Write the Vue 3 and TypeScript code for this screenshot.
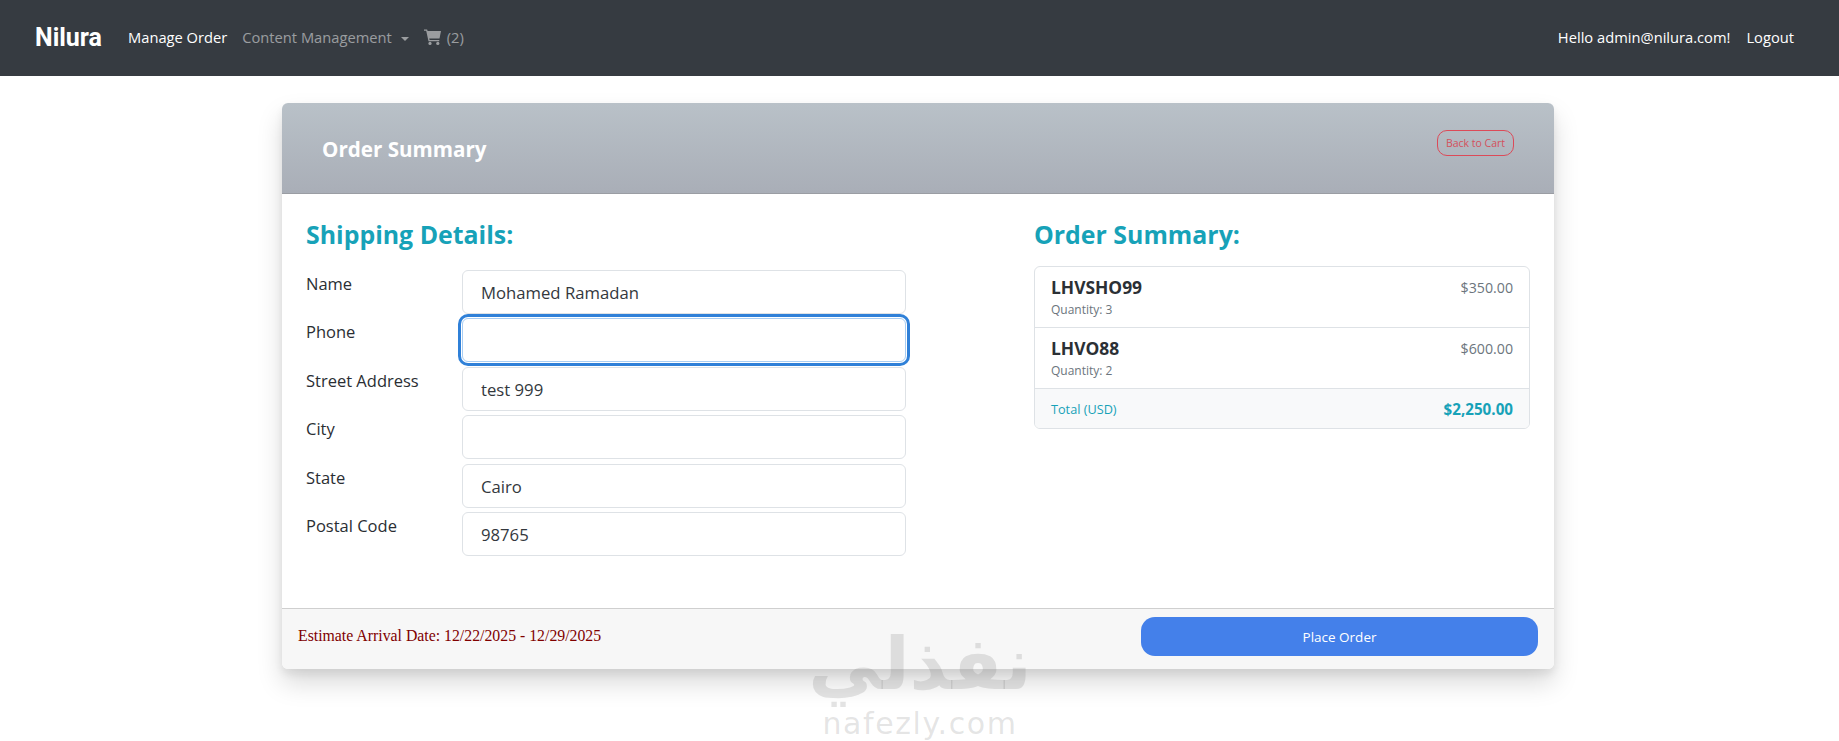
<script setup lang="ts">
interface Field { label: string; value: string; focused?: boolean }
interface Item { code: string; qty: number; price: string }

const fields: Field[] = [
  { label: 'Name', value: 'Mohamed Ramadan' },
  { label: 'Phone', value: '', focused: true },
  { label: 'Street Address', value: 'test 999' },
  { label: 'City', value: '' },
  { label: 'State', value: 'Cairo' },
  { label: 'Postal Code', value: '98765' },
]
const items: Item[] = [
  { code: 'LHVSHO99', qty: 3, price: '$350.00' },
  { code: 'LHVO88', qty: 2, price: '$600.00' },
]
</script>

<template>
  <div class="page">
    <nav class="navbar">
      <div class="nav-left">
        <a class="brand">Nilura</a>
        <a class="link active">Manage Order</a>
        <a class="link muted">Content Management<span class="caret"></span></a>
        <a class="link muted cart">
          <svg class="cart-icon" viewBox="0 0 17 16" aria-hidden="true">
            <path fill="currentColor" d="M0 .5h3.100l.5 1.500H17l-1.500 7.600H5.200l.4 1.500h9.700v1.200H4.500L2.200 1.700H0z" />
            <circle fill="currentColor" cx="6" cy="14.400" r="1.600" />
            <circle fill="currentColor" cx="13.800" cy="14.400" r="1.600" />
          </svg>
          <span>(2)</span>
        </a>
      </div>
      <div class="nav-right">
        <span class="link active">Hello admin@nilura.com!</span>
        <a class="link active">Logout</a>
      </div>
    </nav>

    <main class="card">
      <header class="card-header">
        <h1 class="card-title">Order Summary</h1>
        <button class="back-btn" type="button">Back to Cart</button>
      </header>

      <section class="card-body">
        <div class="col-shipping">
          <h2 class="section-title">Shipping Details:</h2>
          <form class="form">
            <template v-for="f in fields" :key="f.label">
              <label class="form-label">{{ f.label }}</label>
              <input class="form-input" :class="{ focused: f.focused }" type="text" :value="f.value" />
            </template>
          </form>
        </div>

        <div class="col-summary">
          <h2 class="section-title">Order Summary:</h2>
          <ul class="list">
            <li v-for="it in items" :key="it.code" class="list-item">
              <div>
                <div class="item-code">{{ it.code }}</div>
                <div class="item-qty">Quantity: {{ it.qty }}</div>
              </div>
              <span class="item-price">{{ it.price }}</span>
            </li>
            <li class="list-total">
              <span class="total-label">Total (USD)</span>
              <strong class="total-value">$2,250.00</strong>
            </li>
          </ul>
        </div>
      </section>

      <footer class="card-footer">
        <span class="arrival">Estimate Arrival Date: 12/22/2025 - 12/29/2025</span>
        <button class="place-btn" type="button">Place Order</button>
      </footer>
    </main>

    <div class="watermark">
      <div class="wm-ar" dir="rtl" lang="ar">نفذلي</div>
      <div class="wm-en">nafezly.com</div>
    </div>
  </div>
</template>

<style>
html, body { margin: 0; background: #fff; }
</style>

<style scoped>
* { box-sizing: border-box; }
.page {
  position: relative;
  height: 741px;
  overflow: hidden;
  font-family: "Open Sans", "Noto Sans", "Liberation Sans", sans-serif;
  color: #212529;
}
.navbar {
  height: 76px;
  background: #363b41;
  display: flex;
  align-items: center;
  justify-content: space-between;
  padding: 0 45px 2px 35px;
}
.nav-left, .nav-right { display: flex; align-items: center; }
.brand {
  font-family: Roboto, "Liberation Sans", sans-serif;
  font-weight: 700;
  font-size: 25px;
  color: #fff;
  margin-right: 26px;
}
.link { font-size: 14.7px; white-space: nowrap; }
.active { color: #fff; }
.muted { color: rgba(255, 255, 255, 0.5); }
.nav-left .link { margin-right: 15px; }
.nav-right .link { margin-left: 16px; }
.caret {
  display: inline-block;
  margin-left: 9px;
  vertical-align: 2px;
  border-top: 4px solid currentColor;
  border-left: 4px solid transparent;
  border-right: 4px solid transparent;
}
.cart { display: flex; align-items: center; gap: 6px; }
.cart-icon { width: 17px; height: 16px; }

.card {
  margin: 27px 0 0 282px;
  width: 1272px;
  height: 566px;
  display: flex;
  flex-direction: column;
  border-radius: 6px;
  background: #fff;
  box-shadow: 0 14px 26px rgba(0, 0, 0, 0.15), 0 5px 9px rgba(0, 0, 0, 0.07);
}
.card-header {
  height: 91px;
  flex: none;
  display: flex;
  justify-content: space-between;
  align-items: flex-start;
  padding: 27px 40px;
  background: linear-gradient(#b9c1c8, #a9aeb7);
  border-bottom: 1px solid #9a9da3;
  border-radius: 6px 6px 0 0;
}
.card-title {
  margin: 6px 0 0;
  font-size: 20.6px;
  line-height: 27px;
  font-weight: 700;
  color: #fff;
}
.back-btn {
  width: 77px;
  height: 26px;
  padding: 0;
  font: 10.5px "Open Sans", sans-serif;
  color: #d4505c;
  background: transparent;
  border: 1px solid #dc4a58;
  border-radius: 10px;
}
.card-body {
  flex: 1;
  display: flex;
  justify-content: space-between;
  padding: 24px 24px 0;
}
.col-shipping { width: 600px; }
.col-summary { width: 496px; }
.section-title {
  margin: 0;
  font-size: 24.9px;
  line-height: 33px;
  font-weight: 700;
  color: #17a2b8;
}
.form {
  margin-top: 19px;
  display: grid;
  grid-template-columns: 156px 1fr;
  row-gap: 4.4px;
}
.form-label { font-size: 16.5px; line-height: 24px; color: #2a2e33; margin-top: 2px; }
.form-input {
  height: 44px;
  width: 100%;
  padding: 1px 18px 0;
  font: 16.7px "Open Sans", sans-serif;
  color: #33383d;
  background: #fff;
  border: 1px solid #dee2e6;
  border-radius: 6px;
  outline: none;
}
.form-input.focused {
  border-color: #a9cdf2;
  box-shadow: 0 0 0 1px #fff, 0 0 0 4px #2f80d8;
}
.list {
  list-style: none;
  margin: 15px 0 0;
  padding: 0;
  border: 1px solid #dee2e6;
  border-radius: 6px;
  overflow: hidden;
}
.list-item {
  height: 61px;
  padding: 8px 16px 0;
  display: flex;
  justify-content: space-between;
  border-bottom: 1px solid #dee2e6;
}
.item-code { font-size: 17.4px; line-height: 24px; font-weight: 700; color: #2b3035; }
.item-qty { font-size: 12px; line-height: 18px; margin-top: 2px; color: #6c757d; }
.item-price { font-size: 14.2px; line-height: 24px; margin-top: 1px; color: #6c757d; }
.list-total {
  height: 39px;
  padding: 0 16px;
  display: flex;
  align-items: center;
  justify-content: space-between;
  background: #f8f9fa;
}
.total-label { font-size: 12.7px; color: #17a2b8; }
.total-value { font-size: 15.2px; color: #17a2b8; }
.card-footer {
  height: 61px;
  flex: none;
  display: flex;
  align-items: flex-start;
  justify-content: space-between;
  padding: 8px 16px 0;
  background: #f7f7f7;
  border-top: 1px solid #cfcfcf;
  border-radius: 0 0 6px 6px;
}
.arrival {
  font-family: "Liberation Serif", "DejaVu Serif", serif;
  font-size: 15.8px;
  line-height: 38px;
  color: #800000;
}
.place-btn {
  width: 397px;
  height: 39px;
  font: 13.5px "Open Sans", sans-serif;
  color: #fff;
  background: #4480ea;
  border: none;
  border-radius: 14px;
}
.watermark {
  position: absolute;
  left: 790px;
  top: 620px;
  width: 260px;
  text-align: center;
  color: rgba(120, 120, 120, 0.2);
  pointer-events: none;
}
.wm-ar {
  font-family: "DejaVu Sans", "Noto Sans", sans-serif;
  font-weight: 700;
  font-size: 73px;
  line-height: 88px;
}
.wm-en {
  font-family: "DejaVu Sans", sans-serif;
  font-size: 30px;
  line-height: 32px;
  letter-spacing: 1.6px;
}
</style>
